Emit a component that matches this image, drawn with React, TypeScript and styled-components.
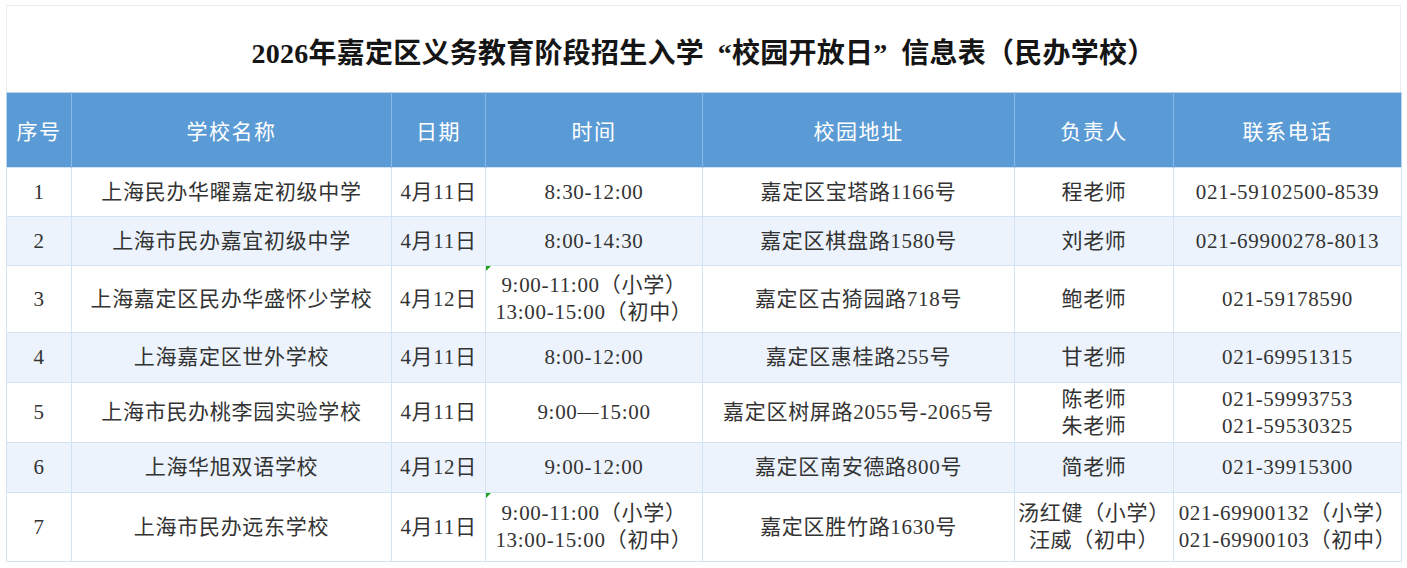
import React from "react";
import styled, { createGlobalStyle } from "styled-components";

const GlobalStyle = createGlobalStyle`
  html, body {
    margin: 0;
    padding: 0;
    background: #ffffff;
  }
  body {
    font-family: "Liberation Serif", "Noto Sans CJK SC", serif;
  }
`;

const Page = styled.div`
  padding: 5px 0 0 6px;
  width: 1395px;
`;

const TitleBar = styled.div`
  height: 87px;
  border: 1px solid #ececec;
  border-bottom: none;
  display: flex;
  align-items: center;
  justify-content: center;
  box-sizing: border-box;
`;

const Title = styled.h1`
  margin: 4px 0 0 0;
  font-family: "Liberation Serif", "Noto Sans CJK SC", serif;
  font-weight: 700;
  font-size: 28px;
  letter-spacing: 0.25px;
  color: #151515;
`;

const Quote = styled.span<{ $side: "open" | "close" }>`
  display: inline-block;
  width: 1em;
  text-align: ${(p) => (p.$side === "open" ? "right" : "left")};
`;

const Table = styled.table`
  width: 1395px;
  table-layout: fixed;
  border-collapse: collapse;
  border: 1px solid #b9d3ee;
`;

const HeadRow = styled.tr`
  height: 75px;
  background: #5b9bd5;
`;

const HeadCell = styled.th`
  font-weight: 400;
  font-size: 21px;
  letter-spacing: 1.5px;
  color: #ffffff;
  text-align: center;
  border-left: 1px solid #8bb9e4;
  padding: 0;
  &:first-child {
    border-left: none;
  }
`;

const BodyRow = styled.tr<{ $striped: boolean; $h: number }>`
  height: ${(p) => p.$h}px;
  background: ${(p) => (p.$striped ? "#ecf3fc" : "#ffffff")};
`;

const Cell = styled.td<{ $flag?: boolean }>`
  position: relative;
  font-size: 21px;
  line-height: 27px;
  letter-spacing: 0.7px;
  color: #333333;
  text-align: center;
  vertical-align: middle;
  border: 1px solid #d3e3f4;
  padding: 0;
  white-space: nowrap;

  &::before {
    content: "";
    display: ${(p) => (p.$flag ? "block" : "none")};
    position: absolute;
    left: 0;
    top: 0;
    border-top: 5px solid #1fa21f;
    border-right: 5px solid transparent;
  }
`;

const Line = styled.div`
  display: block;
`;

const columns = [
  { title: "序号", width: 65 },
  { title: "学校名称", width: 320 },
  { title: "日期", width: 94 },
  { title: "时间", width: 217 },
  { title: "校园地址", width: 312 },
  { title: "负责人", width: 159 },
  { title: "联系电话", width: 228 },
];

type Row = {
  no: string;
  name: string;
  date: string;
  time: string[];
  flag?: boolean;
  address: string;
  contact: string[];
  phone: string[];
  height: number;
};

const rows: Row[] = [
  {
    no: "1",
    name: "上海民办华曜嘉定初级中学",
    date: "4月11日",
    time: ["8:30-12:00"],
    address: "嘉定区宝塔路1166号",
    contact: ["程老师"],
    phone: ["021-59102500-8539"],
    height: 49,
  },
  {
    no: "2",
    name: "上海市民办嘉宜初级中学",
    date: "4月11日",
    time: ["8:00-14:30"],
    address: "嘉定区棋盘路1580号",
    contact: ["刘老师"],
    phone: ["021-69900278-8013"],
    height: 49,
  },
  {
    no: "3",
    name: "上海嘉定区民办华盛怀少学校",
    date: "4月12日",
    time: ["9:00-11:00（小学）", "13:00-15:00（初中）"],
    flag: true,
    address: "嘉定区古猗园路718号",
    contact: ["鲍老师"],
    phone: ["021-59178590"],
    height: 67,
  },
  {
    no: "4",
    name: "上海嘉定区世外学校",
    date: "4月11日",
    time: ["8:00-12:00"],
    address: "嘉定区惠桂路255号",
    contact: ["甘老师"],
    phone: ["021-69951315"],
    height: 50,
  },
  {
    no: "5",
    name: "上海市民办桃李园实验学校",
    date: "4月11日",
    time: ["9:00—15:00"],
    address: "嘉定区树屏路2055号-2065号",
    contact: ["陈老师", "朱老师"],
    phone: ["021-59993753", "021-59530325"],
    height: 60,
  },
  {
    no: "6",
    name: "上海华旭双语学校",
    date: "4月12日",
    time: ["9:00-12:00"],
    address: "嘉定区南安德路800号",
    contact: ["简老师"],
    phone: ["021-39915300"],
    height: 50,
  },
  {
    no: "7",
    name: "上海市民办远东学校",
    date: "4月11日",
    time: ["9:00-11:00（小学）", "13:00-15:00（初中）"],
    flag: true,
    address: "嘉定区胜竹路1630号",
    contact: ["汤红健（小学）", "汪威（初中）"],
    phone: ["021-69900132（小学）", "021-69900103（初中）"],
    height: 69,
  },
];

const Lines: React.FC<{ items: string[] }> = ({ items }) => (
  <>
    {items.map((t) => (
      <Line key={t}>{t}</Line>
    ))}
  </>
);

const App: React.FC = () => {
  return (
    <Page>
      <GlobalStyle />
      <TitleBar>
        <Title lang="zh-CN">
          2026年嘉定区义务教育阶段招生入学<Quote $side="open">“</Quote>校园开放日
          <Quote $side="close">”</Quote>信息表（民办学校）
        </Title>
      </TitleBar>
      <Table>
        <colgroup>
          {columns.map((c) => (
            <col key={c.title} style={{ width: c.width }} />
          ))}
        </colgroup>
        <thead>
          <HeadRow>
            {columns.map((c) => (
              <HeadCell key={c.title}>{c.title}</HeadCell>
            ))}
          </HeadRow>
        </thead>
        <tbody>
          {rows.map((r, i) => (
            <BodyRow key={r.no} $striped={i % 2 === 1} $h={r.height}>
              <Cell>{r.no}</Cell>
              <Cell>{r.name}</Cell>
              <Cell>{r.date}</Cell>
              <Cell $flag={r.flag}>
                <Lines items={r.time} />
              </Cell>
              <Cell>{r.address}</Cell>
              <Cell>
                <Lines items={r.contact} />
              </Cell>
              <Cell>
                <Lines items={r.phone} />
              </Cell>
            </BodyRow>
          ))}
        </tbody>
      </Table>
    </Page>
  );
};

export default App;
